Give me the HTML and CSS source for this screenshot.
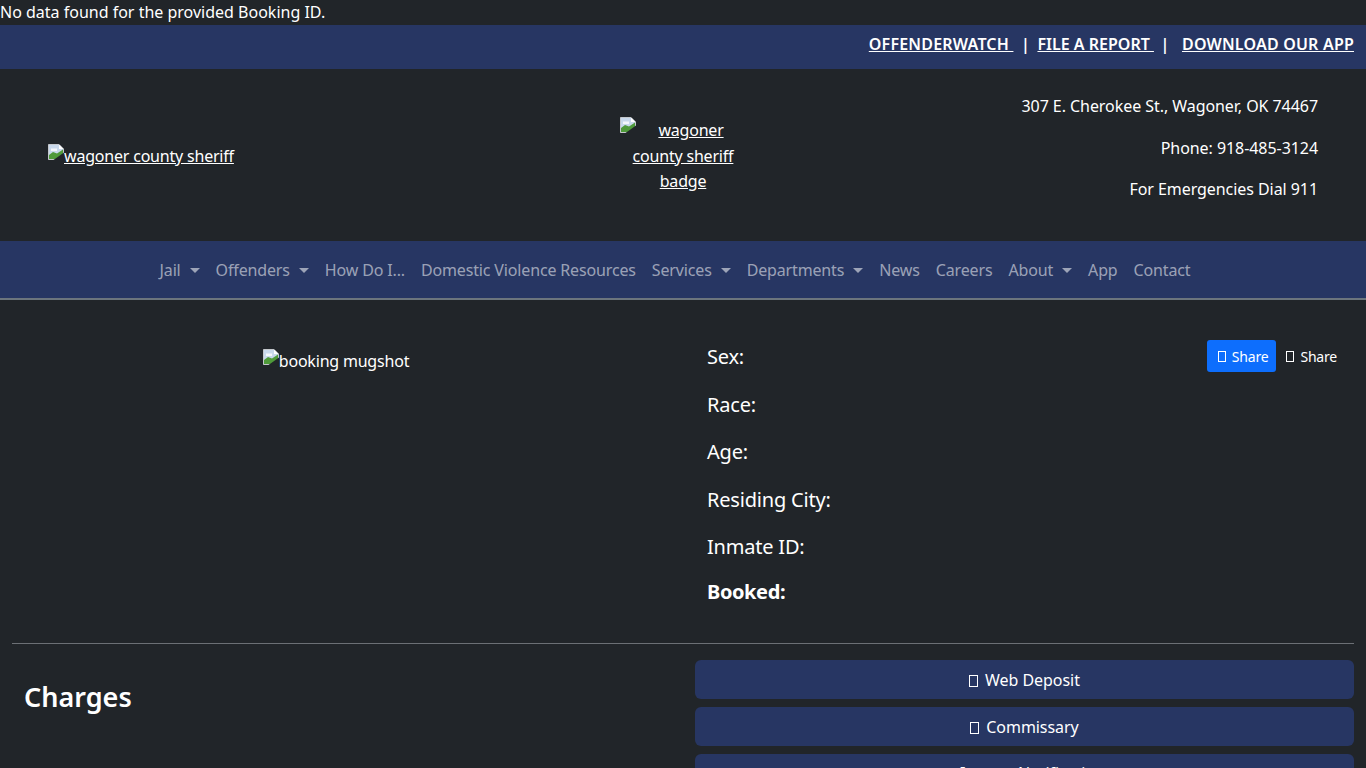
FILE: index.html
```html
<!DOCTYPE html>
<html lang="en">
<head>
<meta charset="utf-8">
<title>Wagoner County Sheriff</title>
<link rel="stylesheet" href="styles.css">
</head>
<body>
<div class="notice">No data found for the provided Booking ID.</div>
<div class="topbar">
  <a href="#">OFFENDERWATCH&nbsp;</a><span class="sep">|</span><a class="tight" href="#">FILE A REPORT&nbsp;</a><span class="sep sep-wide">|</span><a href="#">DOWNLOAD OUR APP</a>
</div>
<header class="masthead">
  <a class="logo" href="#"><svg class="broken" viewBox="0 0 16 16"><path d="M0.5 0.5H11L15.5 5V15.5H0.5Z" fill="#c9d9ec" stroke="#c4c8cc"/><path d="M3 4.5H9V7H3Z" fill="#f4f7fb"/><path d="M1 11L5 8L9 9.5L15 5.5V15H1Z" fill="#4f9a3a"/><path d="M5.5 16L16 8.5V16Z" fill="#212529"/><path d="M11 .5V5H15.5Z" fill="#fff"/></svg>wagoner county sheriff</a>
  <a class="badge" href="#"><svg class="broken floated" viewBox="0 0 16 16"><path d="M0.5 0.5H11L15.5 5V15.5H0.5Z" fill="#c9d9ec" stroke="#c4c8cc"/><path d="M3 4.5H9V7H3Z" fill="#f4f7fb"/><path d="M1 11L5 8L9 9.5L15 5.5V15H1Z" fill="#4f9a3a"/><path d="M5.5 16L16 8.5V16Z" fill="#212529"/><path d="M11 .5V5H15.5Z" fill="#fff"/></svg>wagoner county sheriff badge</a>
  <address class="contact">
    <p>307 E. Cherokee St., Wagoner, OK 74467</p>
    <p>Phone: 918-485-3124</p>
    <p>For Emergencies Dial 911</p>
  </address>
</header>
<nav class="mainnav">
  <a href="#" class="caret">Jail</a>
  <a href="#" class="caret">Offenders</a>
  <a href="#">How Do I...</a>
  <a href="#">Domestic Violence Resources</a>
  <a href="#" class="caret">Services</a>
  <a href="#" class="caret">Departments</a>
  <a href="#">News</a>
  <a href="#">Careers</a>
  <a href="#" class="caret">About</a>
  <a href="#">App</a>
  <a href="#">Contact</a>
</nav>
<main class="page">
  <section class="booking">
    <div class="mugshot"><svg class="broken" viewBox="0 0 16 16"><path d="M0.5 0.5H11L15.5 5V15.5H0.5Z" fill="#c9d9ec" stroke="#c4c8cc"/><path d="M3 4.5H9V7H3Z" fill="#f4f7fb"/><path d="M1 11L5 8L9 9.5L15 5.5V15H1Z" fill="#4f9a3a"/><path d="M5.5 16L16 8.5V16Z" fill="#212529"/><path d="M11 .5V5H15.5Z" fill="#fff"/></svg>booking mugshot</div>
    <div class="details">
      <ul class="facts">
        <li>Sex:</li>
        <li>Race:</li>
        <li>Age:</li>
        <li>Residing City:</li>
        <li>Inmate ID:</li>
        <li class="strong">Booked:</li>
      </ul>
      <div class="share">
        <a class="share-btn primary" href="#"><i class="tofu"></i>Share</a>
        <a class="share-btn plain" href="#"><i class="tofu"></i>Share</a>
      </div>
    </div>
  </section>
  <hr class="rule">
  <section class="lower">
    <h2>Charges</h2>
    <div class="actions">
      <a href="#"><i class="tofu"></i>Web Deposit</a>
      <a href="#"><i class="tofu"></i>Commissary</a>
      <a class="clipped" href="#"><i class="tofu"></i>Inmate Notification</a>
    </div>
  </section>
</main>
</body>
</html>
```
FILE: styles.css
```css
* { box-sizing: border-box; }
html, body { margin: 0; }
body {
  background: #212529;
  color: #fff;
  font-family: "Noto Sans", "Open Sans", sans-serif;
  font-size: 16px;
  line-height: 25.5px;
}
a { color: #fff; }
.notice { height: 25px; }
.topbar {
  height: 44px;
  background: #273663;
  display: flex;
  justify-content: flex-end;
  align-items: center;
  padding: 0 12px 4px;
  font-weight: 600;
  letter-spacing: 0.2px;
}
.tight { letter-spacing: 0; }
.sep { margin: 0 7.5px; }
.sep-wide { margin: 0 12.5px 0 6.5px; }
.masthead {
  height: 172px;
  padding: 0 48px;
  display: grid;
  grid-template-columns: 1fr 127px 1fr;
  align-items: center;
}
.broken { width: 16px; height: 16px; display: inline-block; vertical-align: 2px; }
.floated { float: left; margin-top: -1px; }
.logo { justify-self: start; margin-top: 4px; letter-spacing: -0.2px; }
.badge { display: block; text-align: center; margin-top: 3px; letter-spacing: -0.2px; }
.contact { font-style: normal; text-align: right; padding-bottom: 13px; letter-spacing: -0.06px; }
.contact p { margin: 0 0 16px; }
.contact p:last-child { margin: 0; }
.mainnav {
  height: 59px;
  background: #273663;
  border-bottom: 2px solid #6c757d;
  padding: 2px 16px 0 0;
  display: flex;
  justify-content: center;
  align-items: center;
  letter-spacing: -0.15px;
}
.mainnav a {
  color: rgba(255,255,255,.55);
  text-decoration: none;
  padding: 8px;
}
.caret::after {
  content: "";
  display: inline-block;
  margin-left: 9px;
  vertical-align: 3px;
  border-top: 5px solid;
  border-left: 5px solid transparent;
  border-right: 5px solid transparent;
}
.page { padding: 0 12px; }
.booking {
  height: 343px;
  display: grid;
  grid-template-columns: 648px 1fr;
  column-gap: 35px;
}
.mugshot { text-align: center; padding-top: 49px; letter-spacing: -0.2px; }
.details { display: flex; justify-content: space-between; padding: 40px 9px 0 12px; }
.facts { list-style: none; margin: 0; padding: 4px 0 0; font-size: 20px; letter-spacing: -0.2px; }
.facts li { height: 47.6px; line-height: 25px; }
.facts .strong { font-weight: 700; height: auto; margin-top: -3px; letter-spacing: -0.4px; }
.share { display: flex; height: 32px; font-size: 14px; letter-spacing: -0.2px; }
.share-btn {
  display: flex;
  align-items: center;
  padding: 1px 8px 0 11px;
  text-decoration: none;
  border-radius: 3px;
}
.share-btn.primary { background: #0d6efd; }
.share-btn.plain { padding-left: 10px; }
.tofu {
  display: inline-block;
  width: 8px;
  height: 11px;
  border: 1px solid currentColor;
  margin-right: 6px;
}
.rule { border: 0; border-top: 1px solid #6c7075; margin: 0 0 16px; }
.lower {
  display: grid;
  grid-template-columns: 648px 1fr;
  column-gap: 35px;
}
.lower h2 { margin: 0; padding: 20px 12px 0; font-size: 27px; line-height: 34px; font-weight: 600; }
.actions { display: flex; flex-direction: column; gap: 8px; letter-spacing: -0.05px; }
.actions a {
  height: 39px;
  padding-top: 2px;
  background: #273663;
  border-radius: 6px;
  display: flex;
  align-items: center;
  justify-content: center;
  text-decoration: none;
}
.actions a.clipped { padding-top: 0; }
.actions .tofu { height: 12px; width: 9px; margin-right: 7px; }
```
